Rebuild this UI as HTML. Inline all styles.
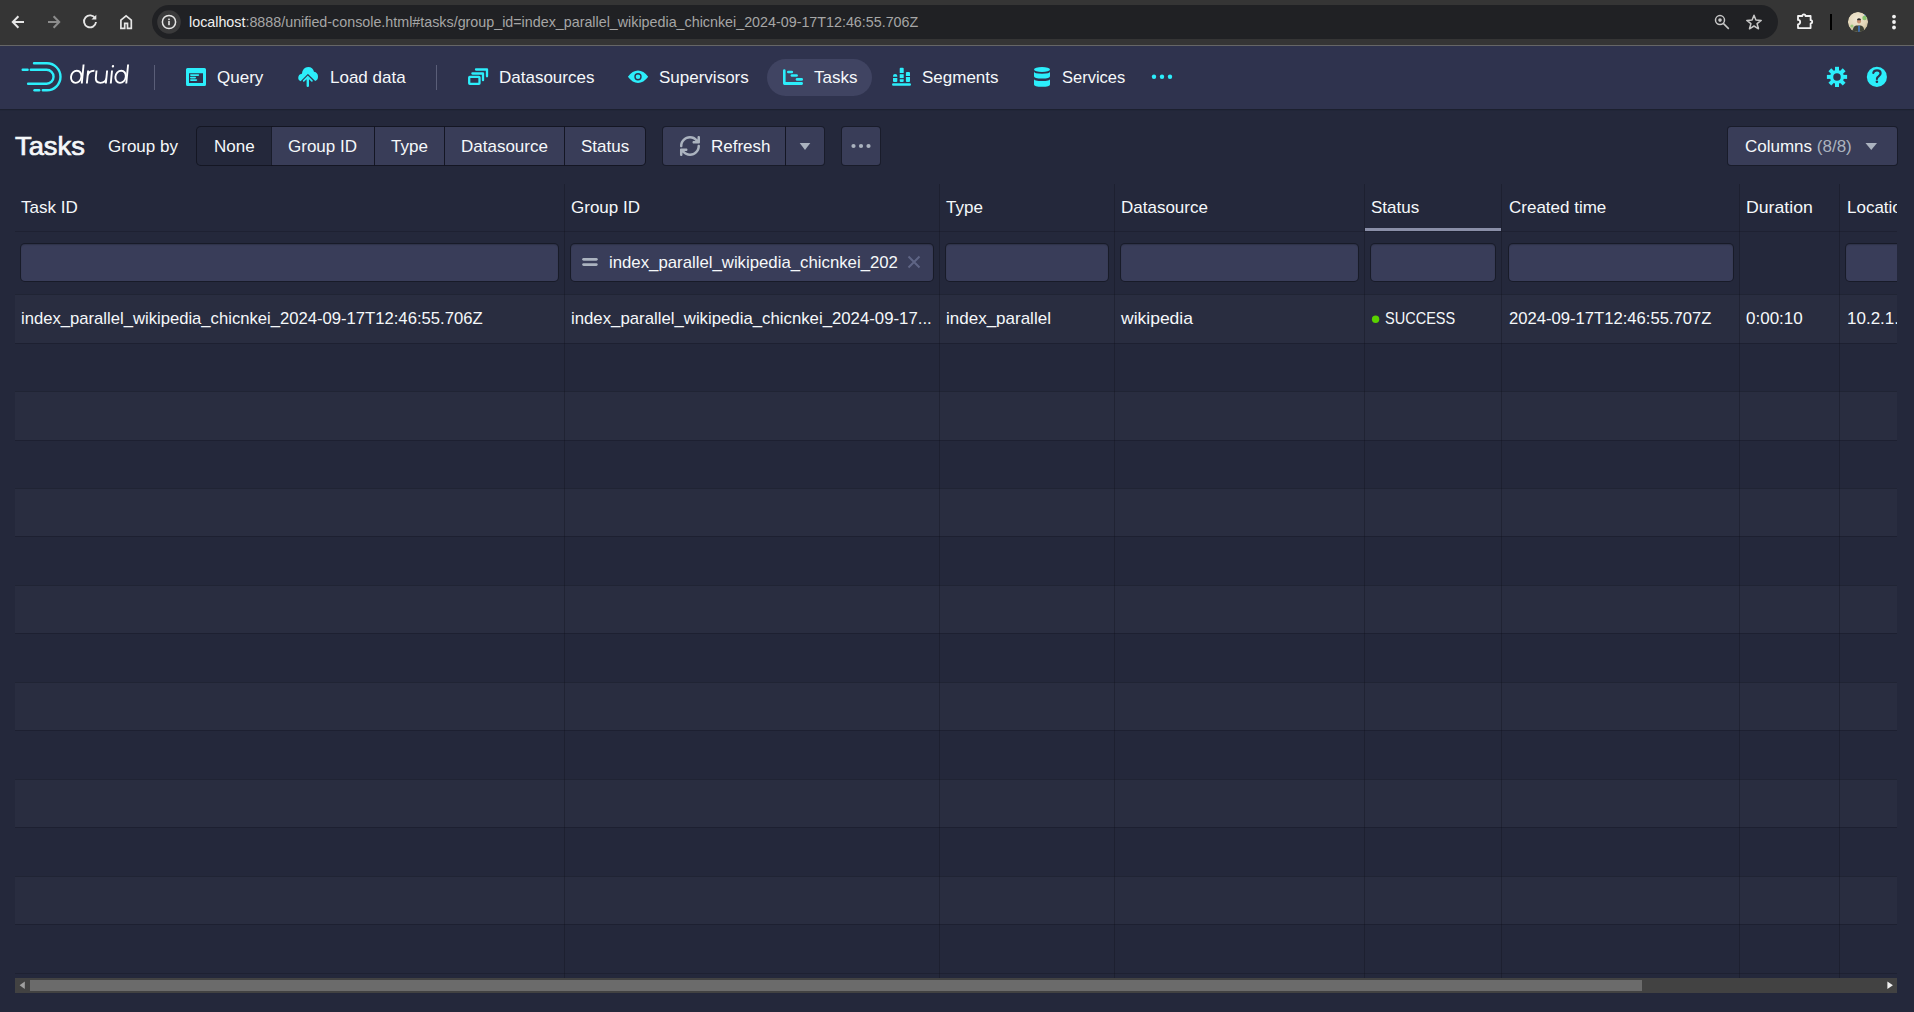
<!DOCTYPE html>
<html><head><meta charset="utf-8">
<style>
*{box-sizing:border-box;margin:0;padding:0}
html,body{width:1914px;height:1012px;overflow:hidden;background:#24283b;font-family:"Liberation Sans",sans-serif;color:#f5f8fa}
.abs{position:absolute}
.t{position:absolute;white-space:pre;line-height:20px}
/* chrome */
#chrome{position:absolute;left:0;top:0;width:1914px;height:45px;background:#353535}
#chromeline{position:absolute;left:0;top:45px;width:1914px;height:1px;background:#666}
#url{position:absolute;left:152px;top:5px;width:1626px;height:34px;border-radius:17px;background:#202124}
#nav{position:absolute;left:0;top:46px;width:1914px;height:63px;background:#2f334e;box-shadow:0 1px 1px rgba(14,16,26,.35)}
.navt{font-size:17px;top:68px;color:#f5f8fa}
.pill{position:absolute;left:767px;top:59px;width:105px;height:37px;border-radius:18.5px;background:#404462}
.sep{position:absolute;width:1px;background:#5c6078}
/* control bar */
.btn{position:absolute;top:127px;height:38px;background:#393d58;box-shadow:0 0 0 1px rgba(16,18,30,.55);border-radius:3px}
.bt{font-size:17px;top:137px}
/* table */
.col{position:absolute;top:184px;width:1px;height:794px;background:rgba(14,16,26,.32)}
.hdr{font-size:17px;top:198px}
.inp{position:absolute;top:244px;height:37px;border-radius:4px;background:#393d59;box-shadow:0 0 0 1px rgba(14,16,26,.55),inset 0 1px 1px rgba(17,20,24,.25)}
.row{position:absolute;left:15px;width:1882px;height:48.45px;border-top:1px solid rgba(14,16,26,.3)}
.odd{background:#292d40}
.cell{font-size:17px;top:309px}
</style></head><body>
<div id="chrome"></div>
<div id="chromeline"></div>
<div id="url"></div>
<svg class="abs" style="left:0;top:0" width="1914" height="45" viewBox="0 0 1914 45">
<g fill="none" stroke-linecap="butt" stroke-linejoin="miter">
<path d="M12.8 22H24M18.4 16.3L12.8 22L18.4 27.7" stroke="#e6e6e6" stroke-width="2"/>
<path d="M48 22H59.2M53.6 16.3L59.2 22L53.6 27.7" stroke="#8c8c8c" stroke-width="2"/>
<path d="M95.2 18.3A6 6 0 1 0 96 22" stroke="#e6e6e6" stroke-width="1.9"/>
<path d="M91.5 19.6H96.3V14.8Z" fill="#e6e6e6" stroke="none"/>
<path d="M120.9 28.3V20.2L126.1 15.9L131.3 20.2V28.3H127.5V23.3H124.7V28.3Z" stroke="#e6e6e6" stroke-width="1.7"/>
</g>
<circle cx="169" cy="22" r="11.8" fill="#3a3a3b"/>
<circle cx="169" cy="22" r="6.6" fill="none" stroke="#e6e6e6" stroke-width="1.5"/>
<rect x="168.2" y="21" width="1.6" height="4.2" fill="#e6e6e6"/>
<rect x="168.2" y="18.6" width="1.6" height="1.6" fill="#e6e6e6"/>
<g fill="none" stroke="#c7c7c7" stroke-width="1.5">
<circle cx="1720" cy="20.1" r="4.5"/>
<path d="M1723.3 23.4L1728.8 28.9"/>
<path d="M1754 15.2L1755.9 20.1L1761.2 20.4L1757.1 23.7L1758.5 28.8L1754 26L1749.5 28.8L1750.9 23.7L1746.8 20.4L1752.1 20.1Z" stroke-linejoin="round"/>
</g>
<circle cx="1720" cy="20.1" r="1.8" fill="#c7c7c7"/>
<path d="M1798 16H1802.3A1.6 1.6 0 0 1 1805.5 16H1810.6V20.2A1.6 1.6 0 0 1 1810.6 23.4V28.1H1798V24.3A2.2 2.2 0 0 0 1798 19.9Z" fill="none" stroke="#f2f2f2" stroke-width="1.8" stroke-linejoin="round"/>
<rect x="1830" y="14" width="2" height="16" fill="#000"/>
<defs><radialGradient id="av" cx="0.45" cy="0.35" r="0.75"><stop offset="0" stop-color="#f0e8d4"/><stop offset="0.6" stop-color="#e2d6b8"/><stop offset="1" stop-color="#b8ae8c"/></radialGradient><clipPath id="avc"><circle cx="1858" cy="22" r="10.1"/></clipPath></defs>
<g clip-path="url(#avc)">
<circle cx="1858" cy="22" r="10.1" fill="url(#av)"/>
<circle cx="1864.5" cy="18" r="2.2" fill="#6fbf5a" opacity=".8"/>
<circle cx="1865.5" cy="14.5" r="1.3" fill="#3a7fd0" opacity=".8"/>
<circle cx="1852" cy="26" r="1.6" fill="#7cc060" opacity=".7"/>
<path d="M1852.5 33Q1852.5 26.5 1856 25.6H1861Q1864.5 26.5 1864.5 33Z" fill="#3f4236"/>
<rect x="1858" y="25.8" width="2" height="7" fill="#3a6aa8"/>
<ellipse cx="1859" cy="21.2" rx="2" ry="2.4" fill="#c89070"/>
<path d="M1856.9 20.2Q1857.2 18.2 1859 18.3Q1861 18.3 1861.1 20.2Z" fill="#2a2a2a"/>
</g>
<circle cx="1894" cy="16.6" r="1.9" fill="#f2f2f2"/>
<circle cx="1894" cy="22" r="1.9" fill="#f2f2f2"/>
<circle cx="1894" cy="27.5" r="1.9" fill="#f2f2f2"/>
</svg>
<div class="t" style="left:189px;top:12px;font-size:14.3px;color:#f0f0f0">localhost<span style="color:#a6a6a6">:8888/unified-console.html#tasks/group_id=index_parallel_wikipedia_chicnkei_2024-09-17T12:46:55.706Z</span></div>
<div id="nav"></div>
<div class="pill"></div>
<svg class="abs" style="left:0;top:46px" width="1914" height="63" viewBox="0 46 1914 63">
<g fill="none" stroke="#2ceefb" stroke-width="2.4" stroke-linecap="round">
<path d="M34 63.3H47A13.5 13.5 0 0 1 47 90.3H42.8"/>
<path d="M30.8 69.8H46.6A6.95 6.95 0 0 1 46.6 83.7H28.1"/>
<path d="M22.7 69.8H27.6"/>
<path d="M34.5 90.3H39.2"/>
</g>
<g fill="none" stroke="#fff" stroke-width="1.9" stroke-linecap="butt" transform="translate(0,83) skewX(-5.6) translate(0,-83)">
<ellipse cx="75.6" cy="76.8" rx="5.2" ry="6.1"/>
<path d="M81.8 64.6V83.4"/>
<path d="M86.9 70.6V83.4M86.9 76Q87.3 70.8 93.2 70.8"/>
<path d="M95.3 70.6V77.6Q95.3 82.9 100.5 82.9Q105.9 82.9 105.9 77.6M105.9 70.6V83.4"/>
<path d="M110.8 70.6V83.4"/>
<ellipse cx="120" cy="76.8" rx="5.2" ry="6.1"/>
<path d="M126.3 64.6V83.4"/>
</g>
<circle cx="111.3" cy="66.2" r="1.2" fill="#fff" transform="translate(0,83) skewX(-5.6) translate(0,-83)"/>
<rect x="154" y="65" width="1" height="25" fill="#5a5e78"/>
<rect x="436" y="65" width="1" height="25" fill="#5a5e78"/>
<g fill="#2ceefb">
<!-- query / application -->
<path fill-rule="evenodd" d="M187.5 68H204.5Q206 68 206 69.5V84.5Q206 86 204.5 86H187.5Q186 86 186 84.5V69.5Q186 68 187.5 68ZM189 73.2V83H203V73.2Z"/>
<rect x="190" y="74.2" width="9.2" height="1.7" rx=".8"/>
<rect x="190" y="76.7" width="6" height="1.7" rx=".8"/>
<rect x="190" y="79.2" width="7.2" height="1.7" rx=".8"/>
<!-- cloud upload -->
<path d="M298.2 78.2Q298.2 74.3 301.9 73.8Q302.8 67 308.2 67Q312.9 67 314 71.8Q318 72.6 318 76.8Q318 80 315.2 81L308 73.9Q307.9 73.8 307.8 73.9L300.6 81.2Q298.2 80.4 298.2 78.2Z"/>
<path d="M307.8 75.6L312.5 80.3Q313.1 80.9 312.5 81.5Q311.9 82.1 311.3 81.5L309 79.2V85.9Q309 87 307.8 87Q306.6 87 306.6 85.9V79.2L304.3 81.5Q303.7 82.1 303.1 81.5Q302.5 80.9 303.1 80.3Z"/>
</g>
<g fill="none" stroke="#2ceefb" stroke-width="2.3" stroke-linecap="round" stroke-linejoin="round">
<rect x="469.2" y="76.9" width="10.3" height="6.9" rx=".6"/>
<path d="M472.4 73.5H483V80.2"/>
<path d="M476 69.5H487V76.3"/>
</g>
<g fill="#2ceefb">
<!-- eye -->
<path fill-rule="evenodd" d="M627.9 76.8Q632.5 70.6 638 70.6Q643.5 70.6 648.2 76.8Q643.5 83 638 83Q632.5 83 627.9 76.8ZM638 80.5A3.7 3.7 0 1 0 638 73.1A3.7 3.7 0 1 0 638 80.5ZM638 79.1A2.3 2.3 0 1 1 638 74.5A2.3 2.3 0 1 1 638 79.1Z"/>
<circle cx="638" cy="76.8" r="1.1"/>
<!-- gantt -->
<path d="M783 70.4Q783 69.2 784.3 69.2Q785.6 69.2 785.6 70.4V82.1H801.7Q803 82.1 803 83.5Q803 84.9 801.7 84.9H784.4Q783 84.9 783 83.5Z"/>
<rect x="787" y="70.7" width="6.1" height="2.5" rx="1.25"/>
<rect x="790.6" y="74.3" width="7.3" height="2.5" rx="1.25"/>
<rect x="795.7" y="78.1" width="7.3" height="2.6" rx="1.3"/>
<!-- stacked chart -->
<rect x="892" y="83.3" width="19" height="2.5" rx="1.25"/>
<path d="M893 76.8V75.9Q893 74.1 895.15 74.1Q897.3 74.1 897.3 75.9V76.8Z"/>
<path d="M893 78.1H897.3V81.1Q897.3 82.1 896.3 82.1H894Q893 82.1 893 81.1Z"/>
<path d="M899.7 73V68.8Q899.7 67.8 900.7 67.8H902.7Q903.7 67.8 903.7 68.8V73Z"/>
<rect x="899.7" y="74.2" width="4" height="3.9"/>
<path d="M899.7 79.3H903.7V81.1Q903.7 82.1 902.7 82.1H900.7Q899.7 82.1 899.7 81.1Z"/>
<path d="M905.9 76V72.9Q905.9 71.9 906.9 71.9H909Q910 71.9 910 72.9V76Z"/>
<path d="M905.9 77H910V81.1Q910 82.1 909 82.1H906.9Q905.9 82.1 905.9 81.1Z"/>
<!-- database -->
<ellipse cx="1042" cy="69.4" rx="8" ry="2.5"/>
<path d="M1034 71.6Q1034 73.8 1042 73.8Q1050 73.8 1050 71.6V76.3Q1050 78.6 1042 78.6Q1034 78.6 1034 76.3Z"/>
<path d="M1034 79Q1034 81 1042 81Q1050 81 1050 79V84.4Q1050 86.8 1042 86.8Q1034 86.8 1034 84.4Z"/>
<!-- more -->
<circle cx="1154" cy="76.8" r="2.2"/>
<circle cx="1162" cy="76.8" r="2.2"/>
<circle cx="1170" cy="76.8" r="2.2"/>
<!-- help -->
<circle cx="1876.9" cy="76.9" r="10.06"/>
</g>
<!-- cog -->
<g transform="translate(1837,76.9)" fill="#2ceefb">
<path fill-rule="evenodd" d="M0 -7A7 7 0 1 1 0 7A7 7 0 1 1 0 -7ZM0 -3.75A3.75 3.75 0 1 0 0 3.75A3.75 3.75 0 1 0 0 -3.75Z"/>
<rect x="-2" y="-10.1" width="4" height="20.2"/>
<rect x="-2" y="-10.1" width="4" height="20.2" transform="rotate(45)"/>
<rect x="-2" y="-10.1" width="4" height="20.2" transform="rotate(90)"/>
<rect x="-2" y="-10.1" width="4" height="20.2" transform="rotate(135)"/>
</g>
<circle cx="1837" cy="76.9" r="3.75" fill="#2f334e"/>
<path d="M1873.3 72.9Q1873.8 70.4 1877 70.4Q1880.6 70.4 1880.6 73.3Q1880.6 75 1878.6 76.4Q1876.9 77.5 1876.9 78.9" fill="none" stroke="#2f334e" stroke-width="2.2" stroke-linecap="round"/>
<circle cx="1876.9" cy="81.8" r="1.3" fill="#2f334e"/>
</svg>


<!-- navbar text -->
<div class="t navt" style="left:217px">Query</div>
<div class="t navt" style="left:330px">Load data</div>
<div class="t navt" style="left:499px">Datasources</div>
<div class="t navt" style="left:659px">Supervisors</div>
<div class="t navt" style="left:814px">Tasks</div>
<div class="t navt" style="left:922px">Segments</div>
<div class="t navt" style="left:1062px;transform:scaleX(0.97);transform-origin:0 0">Services</div>

<!-- control bar -->
<div class="t" style="left:15px;top:131px;font-size:26px;font-weight:normal;-webkit-text-stroke:0.7px #f5f8fa;line-height:30px;transform:scaleX(1.05);transform-origin:0 0">Tasks</div>
<div class="t bt" style="left:108px">Group by</div>
<div class="btn" style="left:197px;width:448px;background:#24283b;border-radius:4px"></div>
<div class="btn" style="left:197px;width:75px;background:#24283b;border-radius:4px 0 0 4px"></div>
<div class="btn" style="left:272px;width:102px;border-radius:0"></div>
<div class="btn" style="left:375px;width:69px;border-radius:0"></div>
<div class="btn" style="left:445px;width:119px;border-radius:0"></div>
<div class="btn" style="left:565px;width:80px;border-radius:0 4px 4px 0"></div>
<div class="t bt" style="left:214px">None</div>
<div class="t bt" style="left:288px">Group ID</div>
<div class="t bt" style="left:391px">Type</div>
<div class="t bt" style="left:461px">Datasource</div>
<div class="t bt" style="left:581px">Status</div>

<div class="btn" style="left:663px;width:122px;border-radius:3px 0 0 3px"></div>
<div class="btn" style="left:786px;width:38px;border-radius:0 3px 3px 0"></div>
<div class="t bt" style="left:711px">Refresh</div>
<div class="btn" style="left:842px;width:38px;border-radius:3px"></div>
<div class="btn" style="left:1728px;width:169px;border-radius:3px"></div>
<div class="t bt" style="left:1745px">Columns <span style="color:#abb3bf">(8/8)</span></div>

<svg class="abs" style="left:0;top:110px" width="1914" height="70" viewBox="0 110 1914 70">
<path transform="translate(680,136) scale(1.25)" fill="#abb3bf" d="M14.99 6.99c-.55 0-1 .45-1 1 0 3.31-2.69 6-6 6-1.77 0-3.36-.78-4.46-2h1.46c.55 0 1-.45 1-1s-.45-1-1-1h-4c-.55 0-1 .45-1 1v4c0 .55.45 1 1 1s1-.45 1-1v-1.74A7.95 7.95 0 0 0 7.99 15.99c4.42 0 8-3.58 8-8 0-.55-.45-1-1-1zM14.99-.01c-.55 0-1 .45-1 1v1.74A7.95 7.95 0 0 0 7.99-.01c-4.42 0-8 3.580-8 8 0 .55.45 1 1 1s1-.45 1-1c0-3.31 2.690-6 6-6 1.77 0 3.36.78 4.46 2h-1.46c-.55 0-1 .45-1 1s.45 1 1 1h4c.55 0 1-.45 1-1v-4c0-.55-.45-1-1-1z"/>
<g fill="#abb3bf">
<path d="M799.7 143H810.3L805 150Z"/>
<circle cx="853.5" cy="146" r="2.1"/>
<circle cx="861" cy="146" r="2.1"/>
<circle cx="868.5" cy="146" r="2.1"/>
<path d="M1865.5 143H1877L1871.25 150Z"/>
</g>
</svg>
<!-- table -->
<div class="row odd" style="top:294.2px"></div>
<div class="row" style="top:342.65px"></div>
<div class="row odd" style="top:391.1px"></div>
<div class="row" style="top:439.55px"></div>
<div class="row odd" style="top:488.0px"></div>
<div class="row" style="top:536.45px"></div>
<div class="row odd" style="top:584.9000000000001px"></div>
<div class="row" style="top:633.35px"></div>
<div class="row odd" style="top:681.8px"></div>
<div class="row" style="top:730.25px"></div>
<div class="row odd" style="top:778.7px"></div>
<div class="row" style="top:827.1500000000001px"></div>
<div class="row odd" style="top:875.6000000000001px"></div>
<div class="row" style="top:924.05px"></div>
<div class="abs" style="left:15px;top:231px;width:1882px;height:1px;background:#1e2132"></div>
<div class="abs" style="left:15px;top:973px;width:1882px;height:1px;background:#1e2132"></div>
<div class="col" style="left:564px"></div>
<div class="col" style="left:939px"></div>
<div class="col" style="left:1114px"></div>
<div class="col" style="left:1364px"></div>
<div class="col" style="left:1501px"></div>
<div class="col" style="left:1739px"></div>
<div class="col" style="left:1839px"></div>
<div class="abs" style="left:1365px;top:228px;width:136px;height:3px;background:#8a8fa8"></div>
<div class="inp" style="left:21px;width:537px"></div>
<div class="inp" style="left:571px;width:362px"></div>
<div class="inp" style="left:946px;width:162px"></div>
<div class="inp" style="left:1121px;width:237px"></div>
<div class="inp" style="left:1371px;width:124px"></div>
<div class="inp" style="left:1509px;width:224px"></div>
<div class="inp" style="left:1846px;width:64px"></div>
<div class="t hdr" style="left:21px">Task ID</div>
<div class="t hdr" style="left:571px">Group ID</div>
<div class="t hdr" style="left:946px">Type</div>
<div class="t hdr" style="left:1121px">Datasource</div>
<div class="t hdr" style="left:1371px">Status</div>
<div class="t hdr" style="left:1509px">Created time</div>
<div class="t hdr" style="left:1746px;transform:scaleX(1.04);transform-origin:0 0">Duration</div>
<div class="t hdr" style="left:1847px">Location</div>
<div class="t cell" style="left:21px;transform:scaleX(0.9787);transform-origin:0 0">index_parallel_wikipedia_chicnkei_2024-09-17T12:46:55.706Z</div>
<div class="t cell" style="left:571px;transform:scaleX(0.9862);transform-origin:0 0">index_parallel_wikipedia_chicnkei_2024-09-17...</div>
<div class="t cell" style="left:946px">index_parallel</div>
<div class="t cell" style="left:1121px;transform:scaleX(1.0290);transform-origin:0 0">wikipedia</div>
<div class="t cell" style="left:1385px;transform:scaleX(0.8544);transform-origin:0 0">SUCCESS</div>
<div class="t cell" style="left:1509px;transform:scaleX(0.9779);transform-origin:0 0">2024-09-17T12:46:55.707Z</div>
<div class="t cell" style="left:1746px">0:00:10</div>
<div class="t cell" style="left:1847px">10.2.1.4:8100</div>
<div class="abs" style="left:15px;top:978px;width:1882px;height:15px;background:#424242"></div>
<div class="abs" style="left:30px;top:980px;width:1612px;height:11px;background:#6b6b6b"></div>
<svg class="abs" style="left:0;top:975px" width="1914" height="20" viewBox="0 975 1914 20"><path d="M24.8 981.5V988.9L19.6 985.2Z" fill="#a0a0a0"/><path d="M1887.4 981.5V988.9L1892.9 985.2Z" fill="#f0f0f0"/></svg>
<div class="abs" style="left:1897px;top:180px;width:17px;height:832px;background:#24283b"></div>
<svg class="abs" style="left:0;top:240px" width="1914" height="100" viewBox="0 240 1914 100">
<g fill="#abb3bf"><rect x="582.2" y="258" width="15.5" height="2.7" rx="1.35"/><rect x="582.2" y="263.2" width="15.5" height="2.7" rx="1.35"/></g>
<path d="M908.5 256.5L919.5 267.5M919.5 256.5L908.5 267.5" stroke="#5f6585" stroke-width="2" fill="none"/>
<circle cx="1375.6" cy="319.2" r="3.7" fill="#5ad200"/>
</svg>
<div class="t cell" style="left:609px;top:253px;transform:scaleX(0.9862);transform-origin:0 0">index_parallel_wikipedia_chicnkei_202</div>
</body></html>
